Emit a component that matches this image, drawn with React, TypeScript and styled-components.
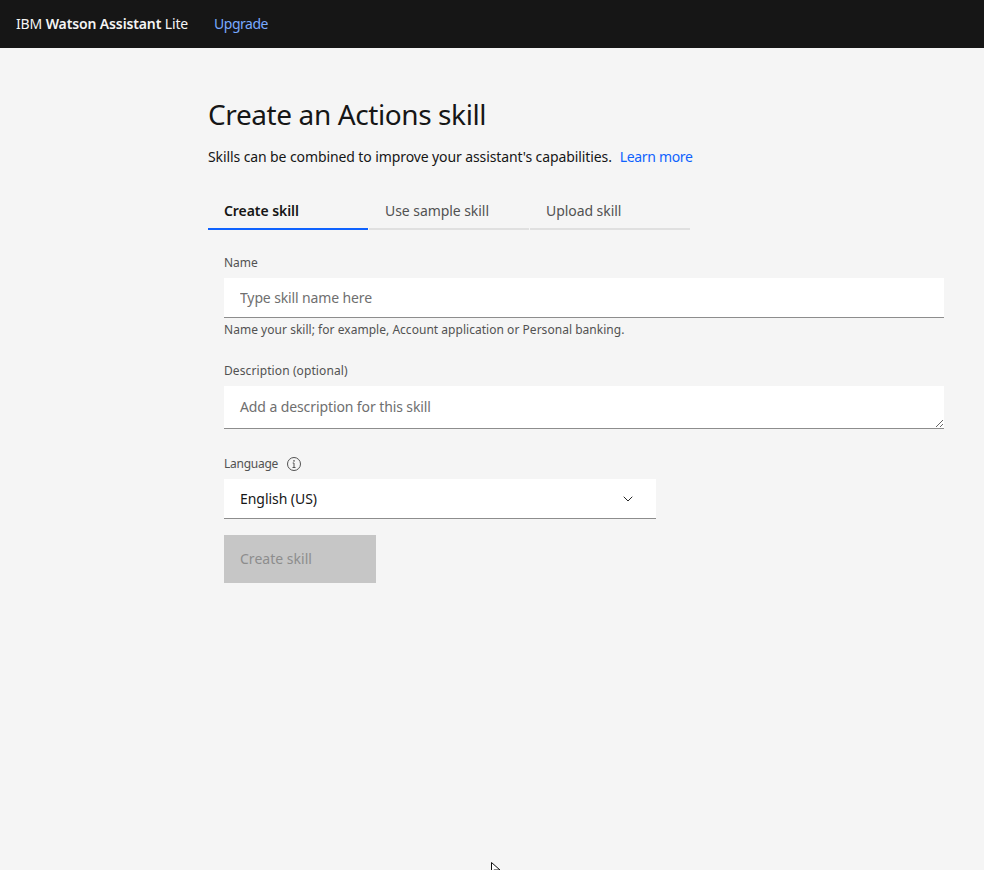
import React from "react";
import styled, { createGlobalStyle } from "styled-components";
import { ChevronDown } from "lucide-react";

const Global = createGlobalStyle`
  html, body { margin: 0; padding: 0; background: #f5f5f5; }
  body { font-family: "Noto Sans", "Open Sans", "Liberation Sans", sans-serif; color: #161616; }
  * { box-sizing: border-box; }
`;

const Page = styled.div`
  position: relative;
  width: 984px;
  height: 870px;
  overflow: hidden;
  background: #f5f5f5;
`;

const Header = styled.header`
  height: 48px;
  background: #161616;
  display: flex;
  align-items: center;
  padding: 0 0 1px 16px;
  gap: 26px;
  font-size: 14px;
`;

const Brand = styled.div`
  color: #f4f4f4;
  letter-spacing: -0.13px;
  strong { font-weight: 600; }
`;

const Upgrade = styled.a`
  color: #78a9ff;
  font-size: 14px;
  letter-spacing: -0.5px;
`;

const Main = styled.main`
  padding: 48px 0 0 208px;
`;

const Title = styled.h1`
  margin: 0;
  height: 36px;
  font-size: 28px;
  line-height: 36px;
  font-weight: 400;
  letter-spacing: -0.4px;
  color: #161616;
`;

const Intro = styled.p`
  margin: 16px 0 0;
  height: 18px;
  font-size: 14px;
  line-height: 18px;
  letter-spacing: -0.1px;
  color: #161616;
  a { color: #0f62fe; margin-left: 8px; letter-spacing: -0.35px; }
`;

const Tabs = styled.div`
  display: flex;
  gap: 1px;
  margin-top: 27px;
  width: 482px;
`;

const Tab = styled.div<{ $active?: boolean }>`
  width: 160px;
  height: 37px;
  padding: 9px 16px 0;
  font-size: 14px;
  line-height: 18px;
  letter-spacing: -0.06px;
  font-weight: ${(p) => (p.$active ? 600 : 400)};
  color: ${(p) => (p.$active ? "#161616" : "#525252")};
  border-bottom: 2px solid ${(p) => (p.$active ? "#0f62fe" : "#e0e0e0")};
`;

const Form = styled.form`
  margin-left: 16px;
  padding-top: 24px;
  width: 720px;
  display: flex;
  flex-direction: column;
`;

const Field = styled.div<{ $gap?: number }>`
  display: flex;
  flex-direction: column;
  margin-bottom: ${(p) => p.$gap ?? 0}px;
`;

const Label = styled.label<{ $spacing?: number }>`
  display: flex;
  align-items: center;
  gap: 8px;
  height: 16px;
  padding-top: 2px;
  margin-bottom: 8px;
  font-size: 12px;
  line-height: 14px;
  letter-spacing: ${(p) => p.$spacing ?? 0}px;
  color: #525252;
`;

const Input = styled.input`
  height: 40px;
  padding: 0 16px;
  border: 0;
  border-bottom: 1px solid #8d8d8d;
  background: #fff;
  font: inherit;
  font-size: 14px;
  letter-spacing: -0.13px;
  color: #161616;
  outline: 0;
  &::placeholder { color: #6f6f6f; opacity: 1; }
`;

const Area = styled.textarea`
  display: block;
  width: 100%;
  height: 43px;
  padding: 11px 16px;
  border: 0;
  border-bottom: 1px solid #8d8d8d;
  background: #fff;
  font: inherit;
  font-size: 14px;
  line-height: 20px;
  letter-spacing: -0.1px;
  color: #161616;
  outline: 0;
  resize: vertical;
  &::placeholder { color: #6f6f6f; opacity: 1; }
`;

const Help = styled.div`
  margin-top: 4px;
  height: 16px;
  font-size: 12px;
  line-height: 16px;
  letter-spacing: 0.03px;
  color: #525252;
`;

const SelectWrap = styled.div`
  position: relative;
  width: 432px;
  height: 40px;
  color: #161616;
  svg { position: absolute; right: 20px; top: 12px; pointer-events: none; }
`;

const Select = styled.select`
  appearance: none;
  width: 100%;
  height: 40px;
  padding: 0 16px;
  border: 0;
  border-bottom: 1px solid #8d8d8d;
  border-radius: 0;
  background: #fff;
  font: inherit;
  font-size: 14px;
  letter-spacing: -0.05px;
  color: #161616;
  outline: 0;
`;

const Submit = styled.button`
  width: 152px;
  height: 48px;
  margin-top: 16px;
  padding: 0 16px 2px;
  border: 0;
  background: #c6c6c6;
  color: #8d8d8d;
  font: inherit;
  font-size: 14px;
  letter-spacing: 0.02px;
  text-align: left;
`;

const Cursor = styled.svg`
  position: absolute;
  left: 491px;
  top: 862px;
`;

const InfoIcon = () => (
  <svg width="16" height="16" viewBox="0 0 16 16" fill="none" stroke="#525252">
    <circle cx="8" cy="8" r="6.5" />
    <path d="M6.5 11.5h3M8 11.5V7H6.7" />
    <circle cx="8" cy="4.9" r="0.8" fill="#525252" stroke="none" />
  </svg>
);

export default function App() {
  return (
    <Page>
      <Global />
      <Header>
        <Brand>
          IBM <strong>Watson Assistant</strong> Lite
        </Brand>
        <Upgrade>Upgrade</Upgrade>
      </Header>
      <Main>
        <Title>Create an Actions skill</Title>
        <Intro>
          Skills can be combined to improve your assistant's capabilities.
          <a>Learn more</a>
        </Intro>
        <Tabs>
          <Tab $active>Create skill</Tab>
          <Tab>Use sample skill</Tab>
          <Tab>Upload skill</Tab>
        </Tabs>
        <Form>
          <Field $gap={24}>
            <Label>Name</Label>
            <Input placeholder="Type skill name here" />
            <Help>Name your skill; for example, Account application or Personal banking.</Help>
          </Field>
          <Field $gap={26}>
            <Label $spacing={0.1}>Description (optional)</Label>
            <Area placeholder="Add a description for this skill" />
          </Field>
          <Field>
            <Label $spacing={-0.25}>
              Language <InfoIcon />
            </Label>
            <SelectWrap>
              <Select defaultValue="en">
                <option value="en">English (US)</option>
              </Select>
              <ChevronDown size={16} strokeWidth={1.4} />
            </SelectWrap>
          </Field>
          <Submit type="button" disabled>
            Create skill
          </Submit>
        </Form>
      </Main>
      <Cursor width="10" height="10" viewBox="0 0 10 10">
        <path d="M0.5 0.5V10L3 8h6z" fill="#fff" stroke="#111" strokeWidth="1" />
      </Cursor>
    </Page>
  );
}
